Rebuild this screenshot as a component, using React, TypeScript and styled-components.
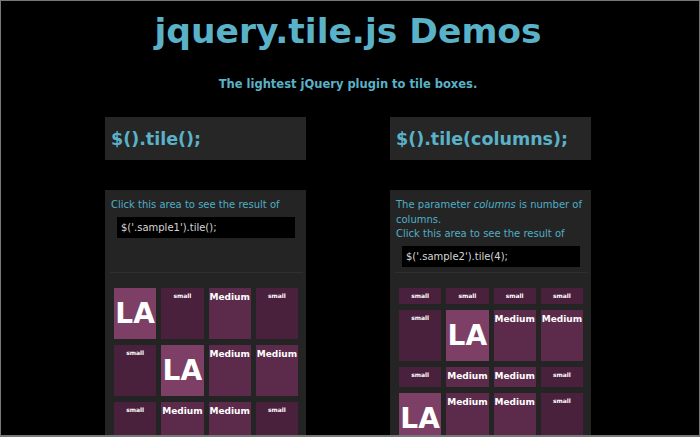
import React from "react";
import styled, { createGlobalStyle } from "styled-components";

const GlobalStyle = createGlobalStyle`
  html, body { margin: 0; padding: 0; background: #000; }
  body { font-family: "DejaVu Sans", Verdana, sans-serif; }
`;

const Frame = styled.div`
  box-sizing: border-box;
  width: 700px;
  height: 437px;
  overflow: hidden;
  background: #000;
  border: 1px solid #787878;
  border-bottom-width: 2px;
  padding-right: 4px;
`;

const Title = styled.h1`
  margin: 0;
  padding-top: 10px;
  font-size: 34.5px;
  line-height: 40px;
  font-weight: bold;
  text-align: center;
  color: #5ab2c8;
`;

const Subtitle = styled.p`
  margin: 26px 0 0;
  font-size: 11.5px;
  line-height: 15px;
  font-weight: bold;
  text-align: center;
  color: #5ab2c8;
`;

const Columns = styled.div`
  display: grid;
  grid-template-columns: 201px 201px;
  grid-template-rows: auto auto auto;
  column-gap: 84px;
  justify-content: center;
  margin-top: 25px;
`;

const Heading = styled.h2`
  margin: 0 0 30px;
  height: 43px;
  box-sizing: border-box;
  padding: 2px 6px 0;
  background: #262626;
  font-size: 17.5px;
  line-height: 41px;
  font-weight: bold;
  color: #5ab2c8;
`;

const Description = styled.div`
  background: #242424;
  padding: 8px 6px 6px 6px;
  font-size: 10px;
  line-height: 14.5px;
  color: #4fafc7;
  position: relative;
  &::after {
    content: "";
    position: absolute;
    left: 5px;
    right: 3px;
    bottom: 0;
    height: 1px;
    background: #2f2f2f;
  }
`;

const Code = styled.div`
  margin: 4px 5px 0 6px;
  height: 21px;
  padding-left: 4px;
  background: #000;
  color: #d6d6d6;
  font-size: 10px;
  line-height: 21px;
`;

const TileArea = styled.div`
  background: #242424;
  padding: 15px 8px 20px 9px;
`;

const TileGrid = styled.div<{ $equal?: boolean }>`
  display: grid;
  grid-template-columns: repeat(4, 1fr);
  grid-auto-rows: ${(p) => (p.$equal ? "1fr" : "auto")};
  column-gap: 5px;
  row-gap: 6px;
`;

type Kind = "small" | "medium" | "large";

const Tile = styled.div<{ $kind: Kind }>`
  box-sizing: border-box;
  color: #fff;
  font-weight: bold;
  text-align: center;
  ${(p) =>
    p.$kind === "large"
      ? `
    background: #7d3f65;
    min-height: 51px;
    font-size: 28px;
    line-height: 28px;
    display: flex;
    align-items: center;
    justify-content: center;
    padding-top: 2px;
  `
      : p.$kind === "medium"
      ? `
    background: #5c2b4b;
    min-height: 20px;
    padding-top: 4px;
    font-size: 9px;
    line-height: 11px;
  `
      : `
    background: #4a213d;
    min-height: 16px;
    padding-top: 4px;
    font-size: 6px;
    line-height: 8px;
  `}
`;

const label: Record<Kind, string> = { small: "small", medium: "Medium", large: "LA" };

const S: Kind = "small";
const M: Kind = "medium";
const L: Kind = "large";

const sample1: Kind[] = [L, S, M, S, S, L, M, M, S, M, M, S, L, M, M, S];
const sample2: Kind[] = [S, S, S, S, S, L, M, M, S, M, M, S, L, M, M, S];

const Tiles = ({ items, equal }: { items: Kind[]; equal?: boolean }) => (
  <TileGrid $equal={equal}>
    {items.map((k, i) => (
      <Tile key={i} $kind={k}>
        {label[k]}
      </Tile>
    ))}
  </TileGrid>
);

export default function App() {
  return (
    <>
      <GlobalStyle />
      <Frame>
        <Title>jquery.tile.js Demos</Title>
        <Subtitle>The lightest jQuery plugin to tile boxes.</Subtitle>
        <Columns>
          <Heading>$().tile();</Heading>
          <Heading>$().tile(columns);</Heading>
          <Description>
            Click this area to see the result of
            <Code>$('.sample1').tile();</Code>
          </Description>
          <Description>
            The parameter <em>columns</em> is number of columns.
            <br />
            Click this area to see the result of
            <Code>$('.sample2').tile(4);</Code>
          </Description>
          <TileArea>
            <Tiles items={sample1} equal />
          </TileArea>
          <TileArea>
            <Tiles items={sample2} />
          </TileArea>
        </Columns>
      </Frame>
    </>
  );
}
